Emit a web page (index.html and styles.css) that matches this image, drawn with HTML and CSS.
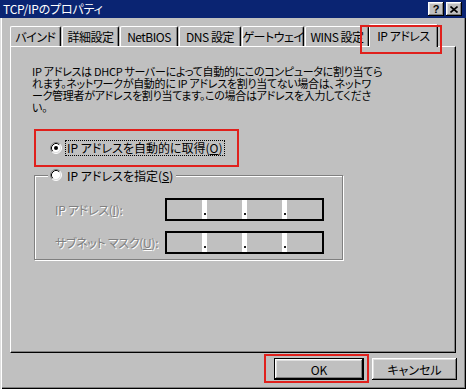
FILE: index.html
```html
<!DOCTYPE html>
<html lang="ja">
<head>
  <meta charset="UTF-8">
  <title>TCP/IPのプロパティ</title>
  <link rel="stylesheet" href="styles.css">
</head>
<body>
  <div class="window">
    <div class="titlebar">
      <span class="title">TCP/IPのプロパティ</span>
      <div class="title-buttons">
        <span class="tbtn">?</span>
        <span class="tbtn">
          <svg width="8" height="7" viewBox="0 0 8 7"><path d="M0.5 0.5 L7.5 6.5 M7.5 0.5 L0.5 6.5" stroke="#000" stroke-width="1.6" fill="none"/></svg>
        </span>
      </div>
    </div>

    <div class="content">
      <div class="tabs">
        <div class="tab">バインド</div>
        <div class="tab">詳細設定</div>
        <div class="tab">NetBIOS</div>
        <div class="tab">DNS 設定</div>
        <div class="tab">ゲートウェイ</div>
        <div class="tab">WINS 設定</div>
        <div class="tab selected">IP アドレス<span class="mark mark-tab"></span></div>
      </div>

      <div class="panel">
        <p class="intro">IP アドレスは DHCP サーバーによって自動的にこのコンピュータに割り当てら<br>れます。ネットワークが自動的に IP アドレスを割り当てない場合は、ネットワ<br>ーク管理者がアドレスを割り当てます。この場合はアドレスを入力してくださ<br>い。</p>

        <div class="choice first">
          <svg class="radio" viewBox="0 0 12 12">
            <circle cx="6" cy="6" r="5" fill="#fff"/>
            <path d="M2.11 9.89 A5.5 5.5 0 0 1 9.89 2.11" stroke="#808080" fill="none"/>
            <path d="M9.89 2.11 A5.5 5.5 0 0 1 2.11 9.89" stroke="#fff" fill="none"/>
            <path d="M2.82 9.18 A4.5 4.5 0 0 1 9.18 2.82" stroke="#000" fill="none"/>
            <path d="M9.18 2.82 A4.5 4.5 0 0 1 2.82 9.18" stroke="#dfdfdf" fill="none"/>
            <circle cx="6" cy="6" r="2" fill="#000"/>
          </svg>
          <span class="focus">IP アドレスを自動的に取得(<u>O</u>)</span>
          <span class="mark mark-choice"></span>
        </div>

        <fieldset class="group">
          <legend class="choice">
            <svg class="radio" viewBox="0 0 12 12">
              <circle cx="6" cy="6" r="5" fill="#fff"/>
              <path d="M2.11 9.89 A5.5 5.5 0 0 1 9.89 2.11" stroke="#808080" fill="none"/>
              <path d="M9.89 2.11 A5.5 5.5 0 0 1 2.11 9.89" stroke="#fff" fill="none"/>
              <path d="M2.82 9.18 A4.5 4.5 0 0 1 9.18 2.82" stroke="#000" fill="none"/>
              <path d="M9.18 2.82 A4.5 4.5 0 0 1 2.82 9.18" stroke="#dfdfdf" fill="none"/>
            </svg>
            <span class="legend-text">IP アドレスを指定(<u>S</u>)</span>
          </legend>

          <div class="field-row">
            <span class="field-label">IP アドレス(<u>I</u>):</span>
            <div class="ip-input">
              <span class="octet"></span><span class="dot"></span>
              <span class="octet"></span><span class="dot"></span>
              <span class="octet"></span><span class="dot"></span>
              <span class="octet"></span>
            </div>
          </div>
          <div class="field-row">
            <span class="field-label">サブネット マスク(<u>U</u>):</span>
            <div class="ip-input">
              <span class="octet"></span><span class="dot"></span>
              <span class="octet"></span><span class="dot"></span>
              <span class="octet"></span><span class="dot"></span>
              <span class="octet"></span>
            </div>
          </div>
        </fieldset>
      </div>

      <div class="buttons">
        <div class="btn ok">OK<span class="mark mark-ok"></span></div>
        <div class="btn cancel">キャンセル</div>
      </div>
    </div>
  </div>
</body>
</html>
```

FILE: styles.css
```css
html, body {
  margin: 0;
  background: #c0c0c0;
  font-family: "Noto Sans CJK JP", "Noto Sans", sans-serif;
  font-size: 12px;
  font-feature-settings: "palt";
  color: #000;
}

.window {
  width: 466px;
  height: 389px;
  box-sizing: border-box;
  background: #c0c0c0;
  box-shadow: inset 1px 0 #dfdfdf, inset 2px 0 #fff, inset -1px -1px #000, inset -2px -2px #808080;
}

/* title bar */
.titlebar {
  height: 18px;
  background: #0a2472;
  color: #fff;
  display: flex;
  align-items: center;
  justify-content: space-between;
  padding: 0 4px 0 3px;
  line-height: 18px;
  letter-spacing: -0.2px;
}

.title-buttons {
  display: flex;
  gap: 2px;
}

.tbtn {
  width: 16px;
  height: 14px;
  box-sizing: border-box;
  background: #c0c0c0;
  box-shadow: inset -1px -1px #000, inset 1px 1px #fff, inset -2px -2px #808080, inset 2px 2px #dfdfdf;
  display: flex;
  align-items: center;
  justify-content: center;
  color: #000;
  font: bold 11px "Liberation Sans", sans-serif;
}

.content {
  padding: 6px 10px 0 10px;
}

/* tabs */
.tabs {
  display: flex;
  align-items: flex-end;
  gap: 1px;
  height: 22px;
  position: relative;
  z-index: 1;
}

.tab {
  height: 20px;
  box-sizing: border-box;
  border-top: 1px solid #fff;
  border-left: 1px solid #fff;
  border-right: 1px solid #000;
  border-radius: 2px 2px 0 0;
  box-shadow: inset -1px 0 #808080;
  display: flex;
  align-items: center;
  justify-content: center;
  white-space: nowrap;
  letter-spacing: -0.5px;
}

.tab:nth-child(1) { width: 51px; }
.tab:nth-child(2) { width: 57px; }
.tab:nth-child(3) { width: 58px; }
.tab:nth-child(4) { width: 62px; }
.tab:nth-child(5) { width: 62px; }
.tab:nth-child(6) { width: 64px; }

.tab.selected {
  width: 69px;
  height: 23px;
  margin-left: -1px;
  margin-bottom: -1px;
  padding-bottom: 2px;
  background: #c0c0c0;
  position: relative;
}

/* panel */
.panel {
  height: 307px;
  box-sizing: border-box;
  border: 1px solid;
  border-color: #fff #000 #000 #fff;
  box-shadow: inset -1px -1px #808080;
  padding: 18px 0 0 21px;
}

.intro {
  margin: 0;
  font-size: 11px;
  line-height: 12px;
  letter-spacing: -0.3px;
  white-space: nowrap;
}

.choice {
  display: flex;
  align-items: center;
  height: 16px;
}

.choice.first {
  margin: 27px 0 0 18px;
  position: relative;
}

.radio {
  width: 12px;
  height: 12px;
  flex: none;
  margin-right: 4px;
}

.focus {
  outline: 1px dotted #000;
  line-height: 14px;
  padding: 0 1px;
}

.group {
  margin: 11px 0 0 2px;
  width: 309px;
  box-sizing: border-box;
  border: 1px solid #808080;
  box-shadow: inset 1px 1px #fff, 1px 1px #fff;
  padding: 0 0 5px 0;
}

.group legend {
  margin-left: 13px;
  padding: 0 2px;
  background: #c0c0c0;
}

.legend-text {
  padding: 0 1px;
}

.field-row {
  display: flex;
  align-items: center;
  height: 24px;
  padding-left: 20px;
  margin-top: 9px;
}

.field-row:first-of-type {
  margin-top: 14px;
}

.field-label {
  width: 110px;
  color: #808080;
  text-shadow: 1px 1px 0 #fff;
  white-space: nowrap;
  letter-spacing: -0.3px;
}

.ip-input {
  width: 159px;
  height: 23px;
  box-sizing: border-box;
  border: 2px solid #000;
  display: flex;
  background: #c0c0c0;
}

.octet {
  flex: 1;
}

.dot {
  width: 5px;
  background: #fff;
  display: flex;
  align-items: flex-end;
  justify-content: center;
}

.dot::after {
  content: "";
  width: 2px;
  height: 2px;
  background: #202020;
  margin-bottom: 4px;
}

/* buttons */
.buttons {
  display: flex;
  justify-content: flex-end;
  gap: 8px;
  margin: 5px -1px 0 0;
}

.btn {
  height: 22px;
  box-sizing: border-box;
  display: flex;
  align-items: center;
  justify-content: center;
  box-shadow: inset -1px -1px #000, inset 1px 1px #fff, inset -2px -2px #808080, inset 2px 2px #dfdfdf;
}

.btn.ok {
  width: 90px;
  border: 1px solid #000;
  position: relative;
}

.btn.cancel {
  width: 85px;
}

/* red annotation boxes */
.mark {
  position: absolute;
  border: 2px solid #e0201c;
  pointer-events: none;
}

.mark-tab {
  top: 0;
  left: -10px;
  right: -5px;
  bottom: -7px;
}

.mark-choice {
  top: -11px;
  bottom: -11px;
  left: -16px;
  width: 201px;
}

.mark-ok {
  top: -5px;
  bottom: -4px;
  left: -11px;
  right: -6px;
}
```
